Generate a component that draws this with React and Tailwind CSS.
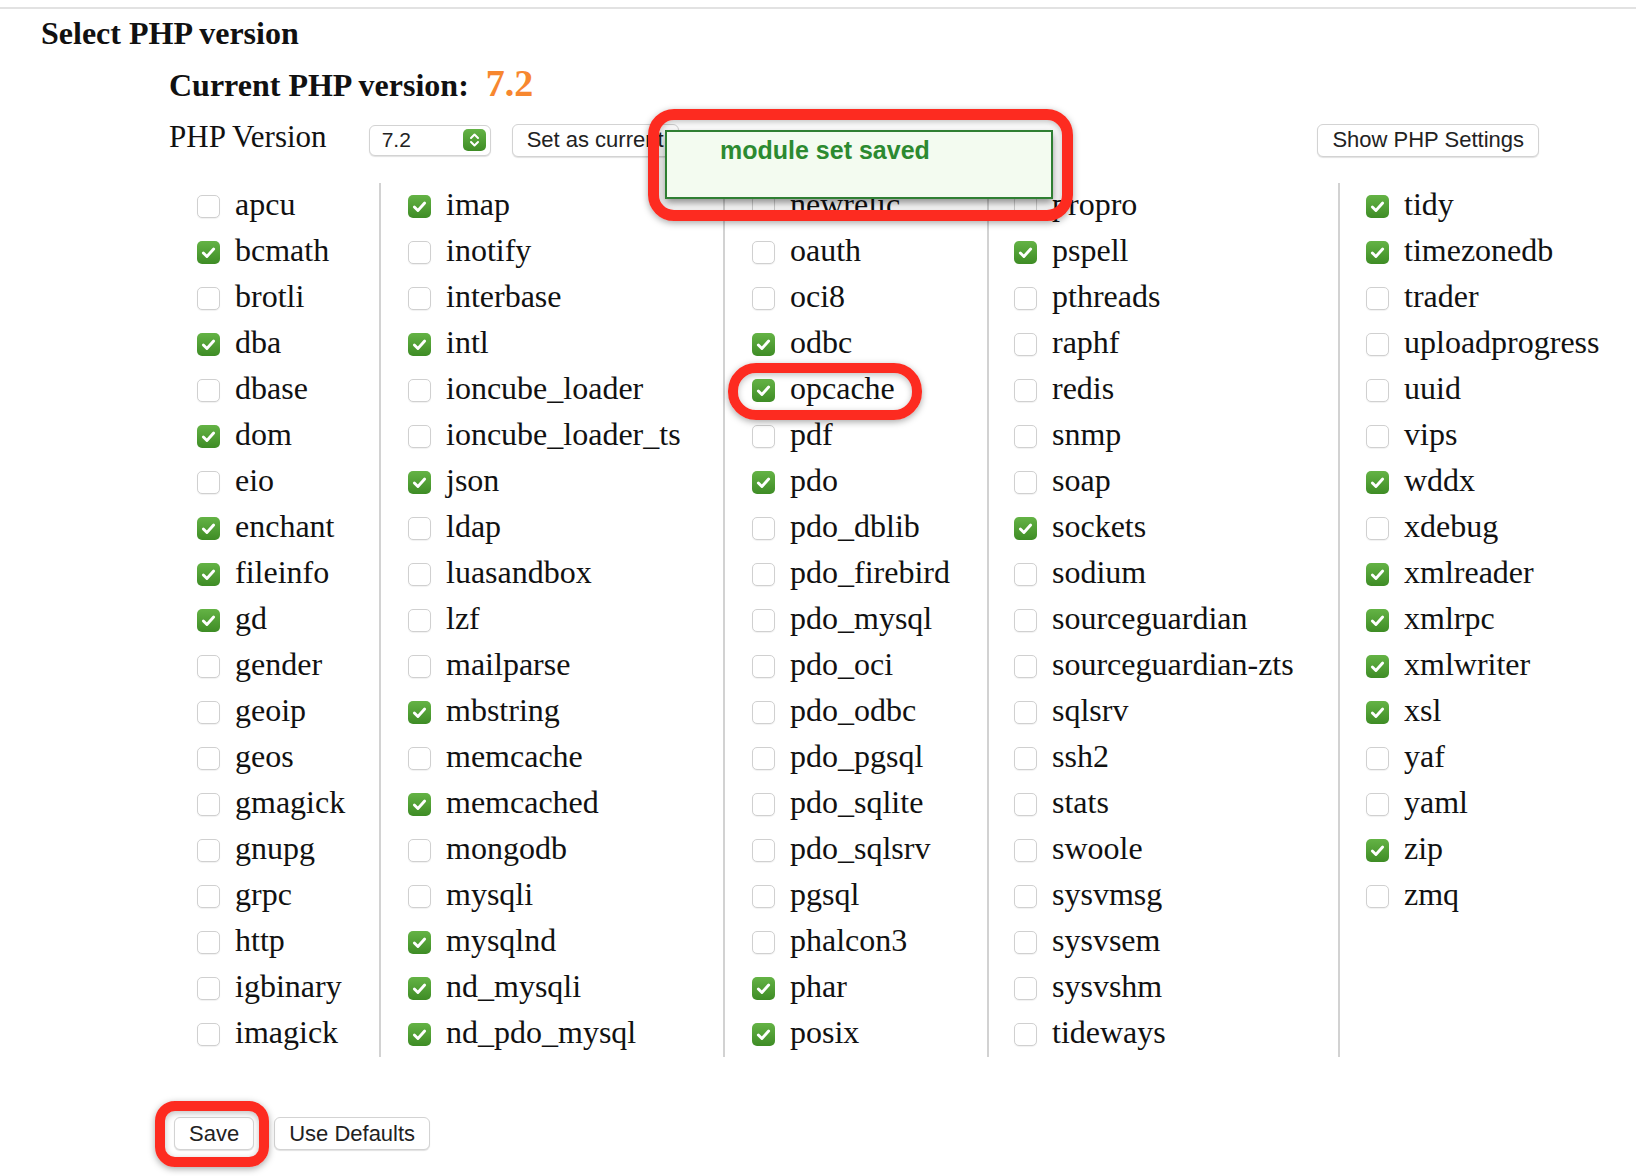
import React from 'react'

const Columns = [
  [
    ['apcu', 0], ['bcmath', 1], ['brotli', 0], ['dba', 1], ['dbase', 0], ['dom', 1], ['eio', 0],
    ['enchant', 1], ['fileinfo', 1], ['gd', 1], ['gender', 0], ['geoip', 0], ['geos', 0],
    ['gmagick', 0], ['gnupg', 0], ['grpc', 0], ['http', 0], ['igbinary', 0], ['imagick', 0]
  ],
  [
    ['imap', 1], ['inotify', 0], ['interbase', 0], ['intl', 1], ['ioncube_loader', 0],
    ['ioncube_loader_ts', 0], ['json', 1], ['ldap', 0], ['luasandbox', 0], ['lzf', 0],
    ['mailparse', 0], ['mbstring', 1], ['memcache', 0], ['memcached', 1], ['mongodb', 0],
    ['mysqli', 0], ['mysqlnd', 1], ['nd_mysqli', 1], ['nd_pdo_mysql', 1]
  ],
  [
    ['newrelic', 0], ['oauth', 0], ['oci8', 0], ['odbc', 1], ['opcache', 1], ['pdf', 0], ['pdo', 1],
    ['pdo_dblib', 0], ['pdo_firebird', 0], ['pdo_mysql', 0], ['pdo_oci', 0], ['pdo_odbc', 0],
    ['pdo_pgsql', 0], ['pdo_sqlite', 0], ['pdo_sqlsrv', 0], ['pgsql', 0], ['phalcon3', 0],
    ['phar', 1], ['posix', 1]
  ],
  [
    ['propro', 0], ['pspell', 1], ['pthreads', 0], ['raphf', 0], ['redis', 0], ['snmp', 0],
    ['soap', 0], ['sockets', 1], ['sodium', 0], ['sourceguardian', 0], ['sourceguardian-zts', 0],
    ['sqlsrv', 0], ['ssh2', 0], ['stats', 0], ['swoole', 0], ['sysvmsg', 0], ['sysvsem', 0],
    ['sysvshm', 0], ['tideways', 0]
  ],
  [
    ['tidy', 1], ['timezonedb', 1], ['trader', 0], ['uploadprogress', 0], ['uuid', 0], ['vips', 0],
    ['wddx', 1], ['xdebug', 0], ['xmlreader', 1], ['xmlrpc', 1], ['xmlwriter', 1], ['xsl', 1],
    ['yaf', 0], ['yaml', 0], ['zip', 1], ['zmq', 0]
  ]
]

const colClass = [
  'w-[210px] shrink-0 pl-[28px]',
  'w-[344px] shrink-0 border-l-2 border-[#d2d2d2] pl-[27px]',
  'w-[264px] shrink-0 border-l-2 border-[#d2d2d2] pl-[27px]',
  'w-[351px] shrink-0 border-l-2 border-[#d2d2d2] pl-[25px]',
  'w-[260px] shrink-0 border-l-2 border-[#d2d2d2] pl-[26px]'
]

function Box({ on }) {
  if (!on) {
    return <span className="h-[23px] w-[23px] shrink-0 rounded-[5px] border border-[#d0d0d0] bg-white shadow-[0_1px_1px_rgba(0,0,0,0.06)]" />
  }
  return (
    <span className="flex h-[23px] w-[23px] shrink-0 items-center justify-center rounded-[5px] bg-linear-to-b from-[#64b345] to-[#3e8c25]">
      <svg viewBox="0 0 24 24" className="h-[19px] w-[19px]">
        <path d="M5.5 12.5l4.5 4.5L18.5 7.5" fill="none" stroke="white" strokeWidth="3.6" strokeLinecap="round" strokeLinejoin="round" />
      </svg>
    </span>
  )
}

function Btn({ children, className = '' }) {
  return (
    <button type="button" className={'h-[33px] shrink-0 rounded-[6px] border border-[#d3d3d3] bg-white px-[14px] text-[22px] leading-none text-[#222] shadow-[0_1px_1px_rgba(0,0,0,0.12)] ' + className}>
      {children}
    </button>
  )
}

function Ring({ className }) {
  return <div className={'pointer-events-none absolute border-[#fd2b20] shadow-[0_2px_7px_rgba(0,0,0,0.35),inset_0_2px_6px_rgba(0,0,0,0.25)] ' + className} />
}

export default function App() {
  return (
    <div className="relative min-h-[1176px] w-[1636px] overflow-hidden bg-white font-['Liberation_Serif',serif] text-[#111]">
      <div className="pt-[7px]">
        <div className="h-[2px] bg-[#e2e2e2]" />
      </div>

      <h1 className="ml-[41px] mt-[8px] text-[32px] font-bold leading-[32px]">Select PHP version</h1>

      <div className="ml-[169px] w-[1370px]">
        <div className="mt-[14px] flex items-baseline">
          <span className="text-[32px] font-bold leading-[40px]">Current PHP version:</span>
          <span className="ml-[17px] text-[38px] font-bold leading-[40px] text-[#f7872f]">7.2</span>
        </div>

        <div className="mt-[19px] flex h-[32px] items-center font-['Liberation_Sans',Arial,sans-serif]">
          <span className="pb-[6px] font-['Liberation_Serif',serif] text-[31px] leading-[32px]">PHP Version</span>
          <div className="ml-[42px] flex h-[31px] w-[122px] items-center justify-between rounded-[6px] border border-[#d3d3d3] bg-white pl-[12px] pr-[4px] shadow-[0_1px_1px_rgba(0,0,0,0.12)]">
            <span className="text-[21px] text-[#222]">7.2</span>
            <svg viewBox="0 0 23 22" className="h-[22px] w-[23px]">
              <defs>
                <linearGradient id="stepg" x1="0" y1="0" x2="0" y2="1">
                  <stop offset="0" stopColor="#64b345" />
                  <stop offset="1" stopColor="#3e8c25" />
                </linearGradient>
              </defs>
              <rect width="23" height="22" rx="5" fill="url(#stepg)" />
              <path d="M8 9l3.5-3.5L15 9M8 13l3.5 3.5L15 13" fill="none" stroke="white" strokeWidth="2" strokeLinecap="round" strokeLinejoin="round" />
            </svg>
          </div>
          <Btn className="ml-[21px]">Set as current</Btn>
          <Btn className="ml-auto h-[32px]">Show PHP Settings</Btn>
        </div>

        <div className="mt-[27px] flex">
          {Columns.map((col, i) => (
            <div key={i} className={colClass[i]}>
              {col.map(([name, on]) => (
                <div key={name} className="flex h-[46px] items-center gap-[15px]">
                  <Box on={on} />
                  <span className="whitespace-nowrap pb-[4px] text-[32px] leading-[46px]">{name}</span>
                </div>
              ))}
              {col.length < 19 && <div style={{ height: (19 - col.length) * 46 }} />}
            </div>
          ))}
        </div>

        <div className="ml-[5px] mt-[60px] flex gap-[20px] font-['Liberation_Sans',Arial,sans-serif]">
          <Btn>Save</Btn>
          <Btn>Use Defaults</Btn>
        </div>
      </div>

      {/* toast */}
      <div className="absolute left-[665px] top-[130px] flex h-[69px] w-[388px] items-start border-2 border-[#2f7f33] bg-[#f3fbf0] pl-[53px] pt-[2px] shadow-[0_4px_8px_rgba(0,0,0,0.45)]">
        <span className="font-['Liberation_Sans',Arial,sans-serif] text-[25px] font-bold leading-[32px] text-[#2c8a30]">module set saved</span>
      </div>

      <Ring className="left-[648px] top-[109px] h-[112px] w-[425px] rounded-[26px] border-[11px]" />
      <Ring className="left-[728px] top-[363px] h-[57px] w-[194px] rounded-[28px] border-[10px]" />
      <Ring className="left-[155px] top-[1101px] h-[66px] w-[114px] rounded-[20px] border-[10px]" />
    </div>
  )
}
